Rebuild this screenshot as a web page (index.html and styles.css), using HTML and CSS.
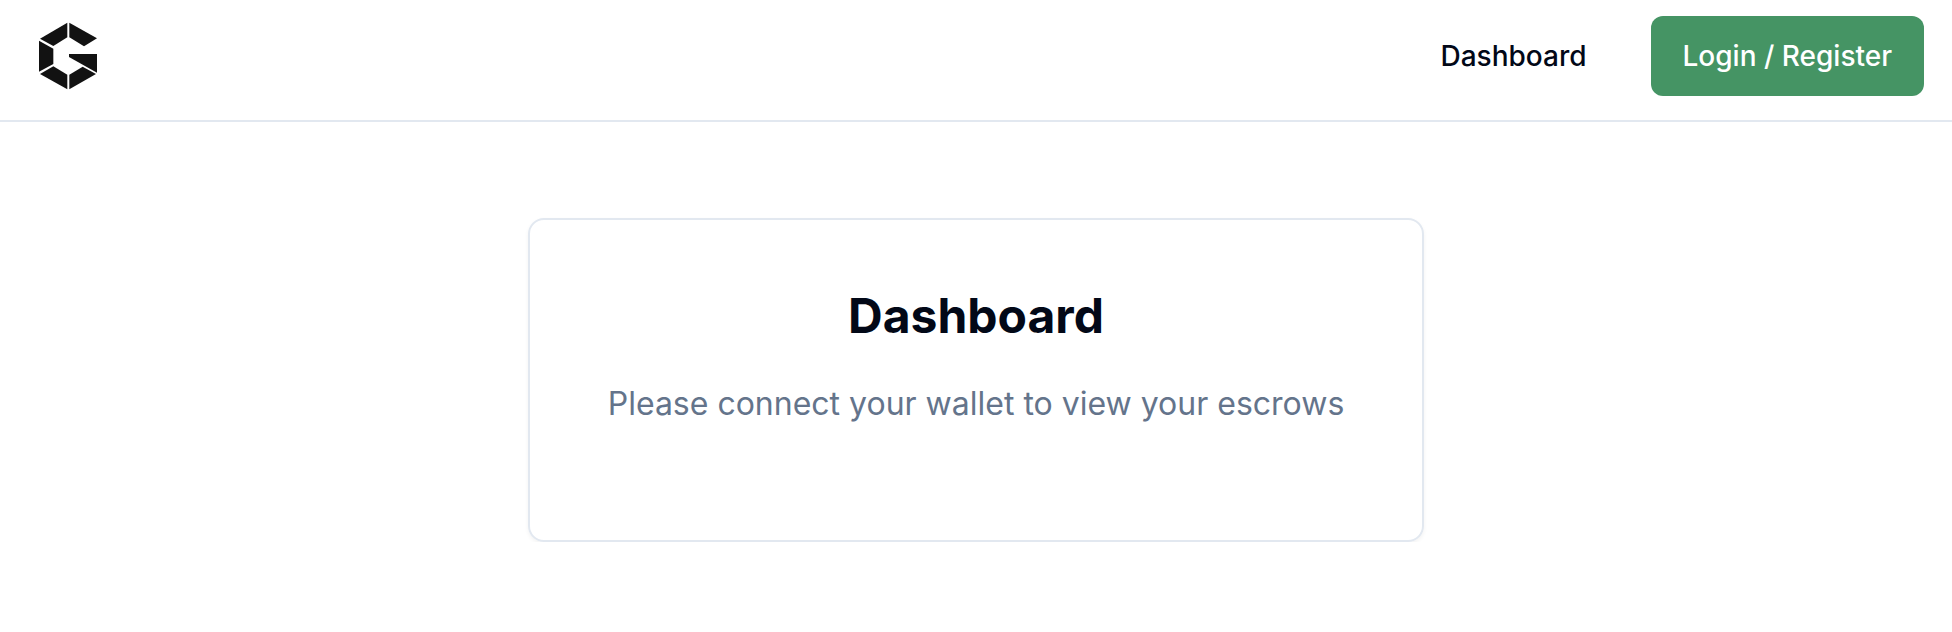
FILE: index.html
```html
<!DOCTYPE html>
<html lang="en">
<head>
<meta charset="utf-8">
<title>Dashboard</title>
<link rel="stylesheet" href="styles.css">
</head>
<body>
<header class="header">
  <a class="logo" aria-label="Home">
    <svg class="logo-mark" viewBox="0 0 240 252" fill="#121212">
      <path d="M112 26V70L70 96L30 74Z"/>
      <path d="M118 26L201 73L162 97L118 70Z"/>
      <path d="M27 80L70 104V150L27 173Z"/>
      <path d="M117 120H201V176L117 129Z"/>
      <path d="M30 180L70 157L112 182V226Z"/>
      <path d="M118 182L158 158L198 180L118 226Z"/>
    </svg>
  </a>
  <nav class="nav">
    <a class="nav-link">Dashboard</a>
    <button class="login">Login / Register</button>
  </nav>
</header>
<main class="main">
  <section class="card">
    <h1 class="title">Dashboard</h1>
    <p class="message">Please connect your wallet to view your escrows</p>
  </section>
</main>
</body>
</html>
```
FILE: styles.css
```css
* { box-sizing: border-box; margin: 0; }
body {
  background: #fff;
  color: #020817;
  font-family: Inter, "Liberation Sans", sans-serif;
}
.header {
  display: flex;
  align-items: flex-start;
  justify-content: space-between;
  height: 122px;
  padding: 14px 28px 0 30px;
  border-bottom: 2px solid #e2e8f0;
}
.logo-mark { display: block; width: 80px; height: 84px; }
.nav { display: flex; align-items: center; gap: 64px; padding-top: 2px; }
.nav-link { font-size: 28px; line-height: 40px; font-weight: 500; }
.login {
  height: 80px;
  padding: 0 32px;
  border: 0;
  border-radius: 12px;
  background: #459464;
  color: #fff;
  font: inherit;
  font-size: 28px;
  line-height: 40px;
  font-weight: 500;
}
.main { display: flex; justify-content: center; padding-top: 96px; }
.card {
  width: 896px;
  height: 324px;
  padding: 64px;
  border: 2px solid #e2e8f0;
  border-radius: 16px;
  box-shadow: 0 2px 4px rgba(0, 0, 0, .05);
  text-align: center;
}
.title {
  font-size: 48px;
  line-height: 64px;
  font-weight: 700;
}
.message {
  margin-top: 32px;
  color: #64748b;
  font-size: 32px;
  line-height: 48px;
}
```
